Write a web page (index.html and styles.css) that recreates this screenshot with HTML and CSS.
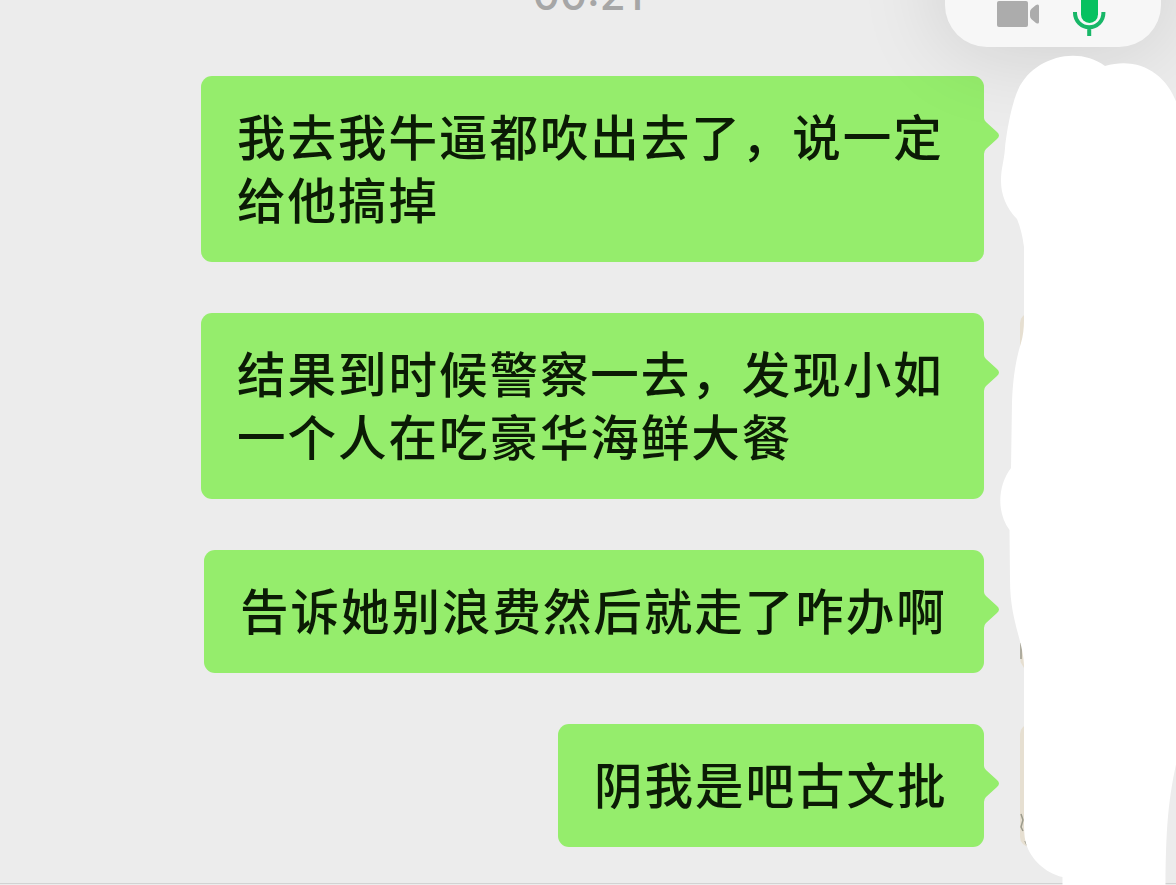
FILE: index.html
```html
<!DOCTYPE html>
<html lang="zh-CN">
<head>
<meta charset="utf-8">
<title>聊天</title>
<link rel="stylesheet" href="styles.css">
</head>
<body>
<main class="chat">
  <time class="timestamp">00:21</time>
  <section class="messages">
    <div class="bubble bubble-wide">我去我牛逼都吹出去了，说一定<br>给他搞掉</div>
    <div class="bubble bubble-wide">结果到时候警察一去，发现小如<br>一个人在吃豪华海鲜大餐</div>
    <div class="bubble">告诉她别浪费然后就走了咋办啊</div>
    <div class="bubble bubble-short">阴我是吧古文批</div>
  </section>
  <div class="divider"></div>
  <div class="call-panel">
    <svg class="camera" width="44" height="28" viewBox="0 0 44 28"><rect x="0" y="1" width="31" height="26" rx="2"/><path d="M33 12Q33 10 34.500 8.800L39 5Q42 3.600 42 6V22Q42 24.400 39 23L34.500 19.200Q33 18 33 16Z"/></svg>
    <svg class="mic" width="34" height="50" viewBox="0 0 34 50"><rect x="9" y="6" width="17" height="31" rx="8.500"/><path d="M3 26V27A14.200 14.200 0 0 0 31.400 27V26M17.200 41V50"/></svg>
  </div>
  <svg class="overlay" width="176" height="885" viewBox="1000 0 176 885">
    <g class="avatar-edges">
      <rect x="1020" y="313" width="40" height="120" rx="10"/>
      <path d="M1020.500 640L1024 656V668L1020.500 662Z"/>
      <rect x="1020" y="724" width="40" height="123" rx="10"/>
    </g>
    <path class="avatar-mark" d="M1021 643V659M1021 814L1023 820L1021 827L1023 831M1025 841L1027 845"/>
    <path class="mask" d="M1024 320V247Q1022 231 1017 219C1006 208 1001 194 1001 181C1001 168 1004 162 1005 148C1007 129 1012 103 1018 90C1032 58 1077 45 1105 66C1140 56 1167 75 1177 104V760C1168 800 1166 829 1165.500 885H1062.500V877C1045 873 1031 859 1026.500 845Q1024 838 1024 825V665C1023 640 1010 621 1010 580L1009.500 530C996 512 998 485 1011 468L1012 402C1013 377 1016 359 1021 343Q1024 333 1024 320Z"/>
  </svg>
</main>
</body>
</html>
```
FILE: styles.css
```css
body { margin: 0; background: #ececec; }
.chat {
  position: relative;
  width: 1176px;
  height: 885px;
  overflow: hidden;
  display: flex;
  flex-direction: column;
  background: #ececec;
}
.timestamp {
  height: 76px;
  flex: none;
  text-align: center;
  font: 500 42px/50px Inter, sans-serif;
  color: #a6a6a6;
}
.timestamp::before {
  content: "";
  display: block;
  margin-top: -30px;
}
.messages {
  display: flex;
  flex-direction: column;
  align-items: flex-end;
  gap: 51px;
  padding-right: 192px;
}
.bubble {
  position: relative;
  box-sizing: border-box;
  padding: 28px 37px 32px 36px;
  width: 780px;
  border-radius: 11px;
  background: #95ed6c;
  color: #0b1b05;
  font: 500 48.5px/63px "Noto Sans CJK SC", sans-serif;
  letter-spacing: 1.98px;
  white-space: nowrap;
}
.bubble-wide { width: 783px; }
.bubble-short { width: 426px; }
.bubble::after {
  content: "";
  position: absolute;
  left: 100%;
  top: 42px;
  width: 16px;
  height: 36px;
  margin-left: -1px;
  background: #95ed6c;
  clip-path: path("M0 0H1Q1 2 3 4L14 14Q18 17.500 14 21L3 31Q1 33 1 36H0Z");
}
.divider {
  height: 1px;
  margin-top: 36px;
  flex: none;
  background: #d2d2d2;
}
.call-panel {
  position: absolute;
  left: 945px;
  top: -60px;
  width: 216px;
  height: 107px;
  border-radius: 0 0 42px 42px;
  background: #f7f7f7;
  box-shadow: 0 0 90px rgba(0, 0, 0, 0.14);
}
.camera {
  position: absolute;
  left: 52px;
  top: 60px;
  fill: #acacac;
}
.mic {
  position: absolute;
  left: 127px;
  top: 46px;
  fill: #07c160;
}
.mic path {
  fill: none;
  stroke: #18b768;
  stroke-width: 4;
}
.overlay {
  position: absolute;
  right: 0;
  top: 0;
}
.avatar-edges { fill: #e6dfd1; }
.avatar-mark { fill: none; stroke: #9c9b8c; stroke-width: 1.5; }
.mask { fill: #fff; }
```
